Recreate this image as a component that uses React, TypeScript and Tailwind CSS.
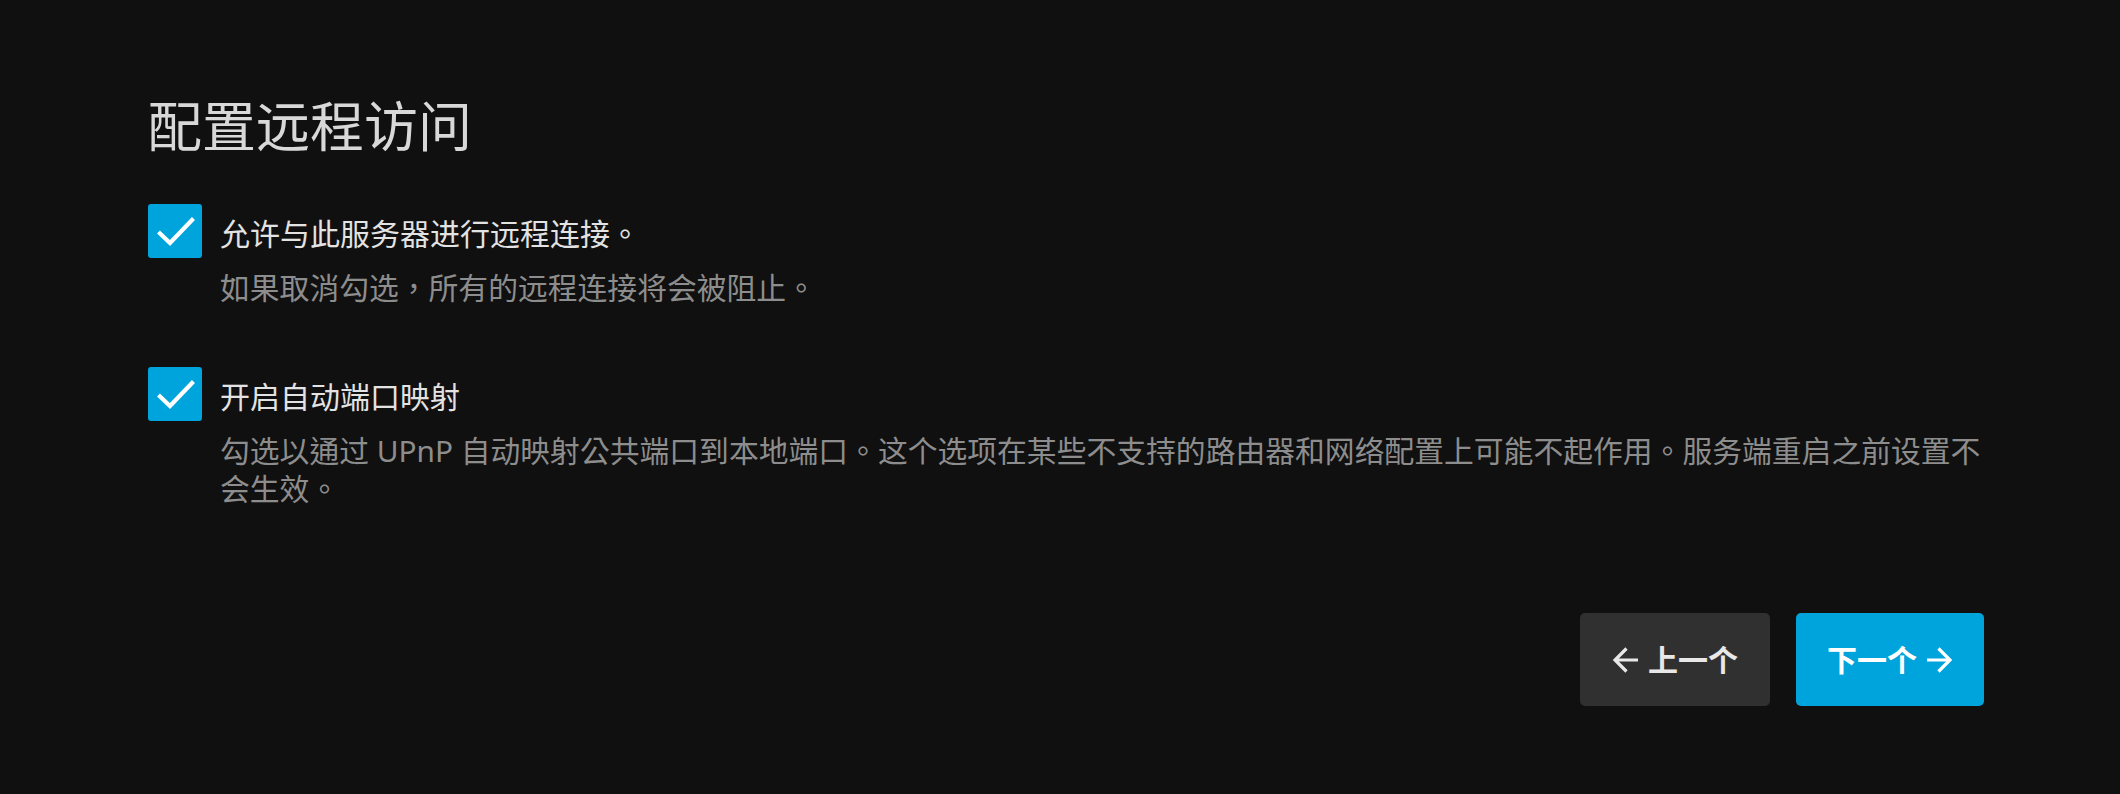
import { useState } from 'react';

function CheckIcon() {
  return (
    <svg viewBox="0 0 54 54" className="size-[54px]">
      <polyline
        points="12,29.5 22,39 44,16"
        fill="none"
        stroke="white"
        strokeWidth="4.2"
        strokeLinecap="square"
      />
    </svg>
  );
}

function Arrow({ dir }: { dir: 'left' | 'right' }) {
  return (
    <svg viewBox="0 0 28 28" className={`size-[28px] ${dir === 'right' ? 'rotate-180' : ''}`}>
      <path d="M26 14H3 M14.5 2.5 L3 14 L14.5 25.5" fill="none" stroke="currentColor" strokeWidth="3.2" />
    </svg>
  );
}

interface OptionProps {
  label: string;
  description: string;
  checked: boolean;
  onToggle: () => void;
}

function Option({ label, description, checked, onToggle }: OptionProps) {
  return (
    <div>
      <label className="flex items-start gap-[18px] cursor-pointer" onClick={onToggle}>
        <span
          className={`size-[54px] shrink-0 rounded-[3px] flex items-center justify-center ${
            checked ? 'bg-[#00a4dc]' : 'border-2 border-[#888]'
          }`}
        >
          {checked && <CheckIcon />}
        </span>
        <span className="text-[30px] leading-[54px] pt-[3px] text-[#e3e3e3]">{label}</span>
      </label>
      <p className="mt-[8px] ml-[72px] text-[29.8px] leading-[38px] text-[#8d8d8d]">{description}</p>
    </div>
  );
}

export default function App() {
  const [remote, setRemote] = useState(true);
  const [upnp, setUpnp] = useState(true);

  return (
    <div className="min-h-screen bg-[#101010] font-['Noto_Sans','Noto_Sans_CJK_TC',sans-serif] pl-[148px] pr-[136px] pt-[94px]">
      <h1 className="text-[54px] leading-[64px] text-[#d8d8d8] font-normal">配置远程访问</h1>

      <div className="mt-[46px]">
        <Option
          label="允许与此服务器进行远程连接。"
          description="如果取消勾选，所有的远程连接将会被阻止。"
          checked={remote}
          onToggle={() => setRemote(!remote)}
        />
      </div>

      <div className="mt-[60px]">
        <Option
          label="开启自动端口映射"
          description="勾选以通过 UPnP 自动映射公共端口到本地端口。这个选项在某些不支持的路由器和网络配置上可能不起作用。服务端重启之前设置不会生效。"
          checked={upnp}
          onToggle={() => setUpnp(!upnp)}
        />
      </div>

      <div className="mt-[105px] flex justify-end gap-[26px]">
        <button className="w-[190px] h-[93px] rounded-[5px] bg-[#303030] text-[#e8e8e8] text-[30px] font-bold flex items-center justify-center gap-[8px]">
          <Arrow dir="left" />
          <span>上一个</span>
        </button>
        <button className="w-[188px] h-[93px] rounded-[5px] bg-[#00a4dc] text-white text-[30px] font-bold flex items-center justify-center gap-[8px]">
          <span>下一个</span>
          <Arrow dir="right" />
        </button>
      </div>
    </div>
  );
}
